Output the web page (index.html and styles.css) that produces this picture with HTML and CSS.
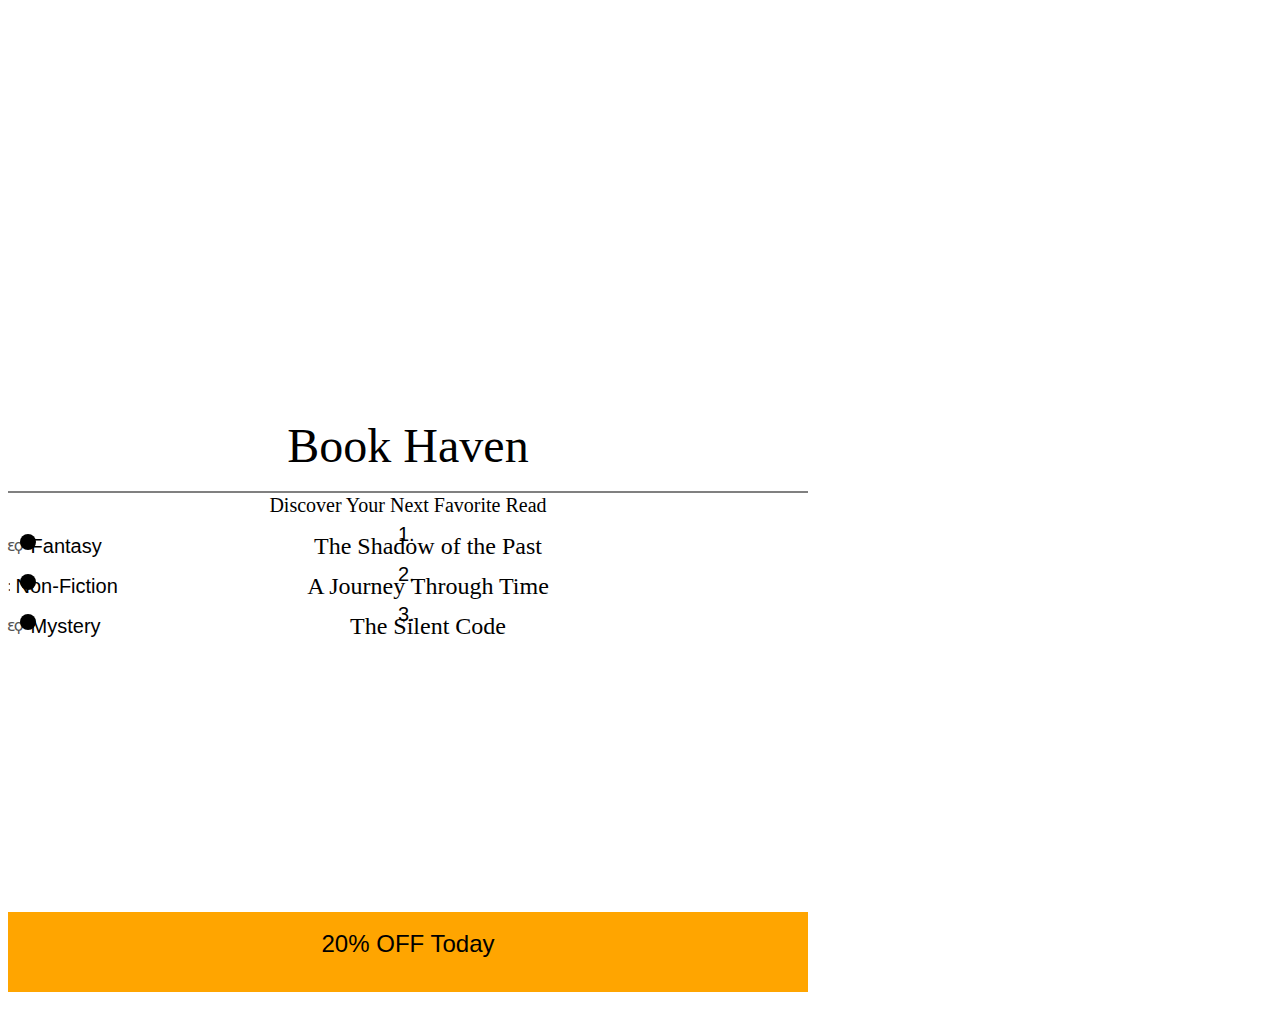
FILE: index.html
```html
<!DOCTYPE html>
<html lang="en">
<head>
<meta charset="utf-8">
<title>Book Haven</title>
<link rel="stylesheet" href="styles.css">
</head>
<body>
<div class="page">
  <main class="main">
    <h1 class="title">Book Haven</h1>
    <p class="subtitle">Discover Your Next Favorite Read</p>
    <div class="lists">
      <ul class="categories">
        <li class="cat"><span class="dot"></span><span class="icon">ɛϙ</span> Fantasy</li>
        <li class="cat"><span class="dot"></span><span class="icon icon-narrow">:</span> Non-Fiction</li>
        <li class="cat"><span class="dot"></span><span class="icon">ɛϙ</span> Mystery</li>
      </ul>
      <ol class="books">
        <li class="book"><span class="num">1.</span>The Shadow of the Past</li>
        <li class="book"><span class="num">2.</span>A Journey Through Time</li>
        <li class="book"><span class="num">3.</span>The Silent Code</li>
      </ol>
    </div>
  </main>
  <div class="banner">20% OFF Today</div>
</div>
</body>
</html>
```
FILE: styles.css
```css
html, body {
  margin: 0;
  padding: 0;
  background: #ffffff;
}
body {
  padding: 8px;
  font-family: "Liberation Serif", "Times New Roman", serif;
  color: #000000;
}
.page {
  width: 800px;
  min-height: 984px;
  display: flex;
  flex-direction: column;
}
.main {
  padding-top: 410px;
}
.title {
  margin: 0;
  font-size: 48px;
  font-weight: normal;
  text-align: center;
  padding-bottom: 18px;
  border-bottom: 2px solid #808080;
}
.subtitle {
  margin: 0;
  padding-top: 1px;
  font-size: 20px;
  text-align: center;
}
.lists {
  display: grid;
  grid-template-columns: 40px 1fr;
  margin-top: 9px;
}
.categories {
  list-style: none;
  margin: 0;
  padding: 0;
  font-family: "Liberation Sans", Arial, sans-serif;
  font-size: 20px;
  white-space: nowrap;
}
.cat {
  position: relative;
  height: 40px;
  line-height: 40px;
  margin-left: -1px;
}
.icon {
  display: inline-block;
  width: 18px;
  font-family: "DejaVu Sans", sans-serif;
  font-size: 16px;
  color: #555555;
  letter-spacing: -2px;
  overflow: hidden;
  vertical-align: top;
}
.icon-narrow {
  width: 3px;
}
.dot {
  position: absolute;
  left: 13px;
  top: 8px;
  width: 16px;
  height: 16px;
  border-radius: 50%;
  background: #000000;
}
.books {
  list-style: none;
  margin: 0;
  padding: 0;
  text-align: center;
  font-size: 24px;
}
.book {
  position: relative;
  height: 40px;
  line-height: 40px;
}
.num {
  position: absolute;
  left: calc(50% - 30px);
  top: -3px;
  font-family: "Liberation Sans", Arial, sans-serif;
  font-size: 20px;
  line-height: 23px;
}
.banner {
  margin-top: auto;
  height: 80px;
  box-sizing: border-box;
  padding-top: 18px;
  background: #ffa500;
  text-align: center;
  font-family: "Liberation Sans", Arial, sans-serif;
  font-size: 24px;
}
```
